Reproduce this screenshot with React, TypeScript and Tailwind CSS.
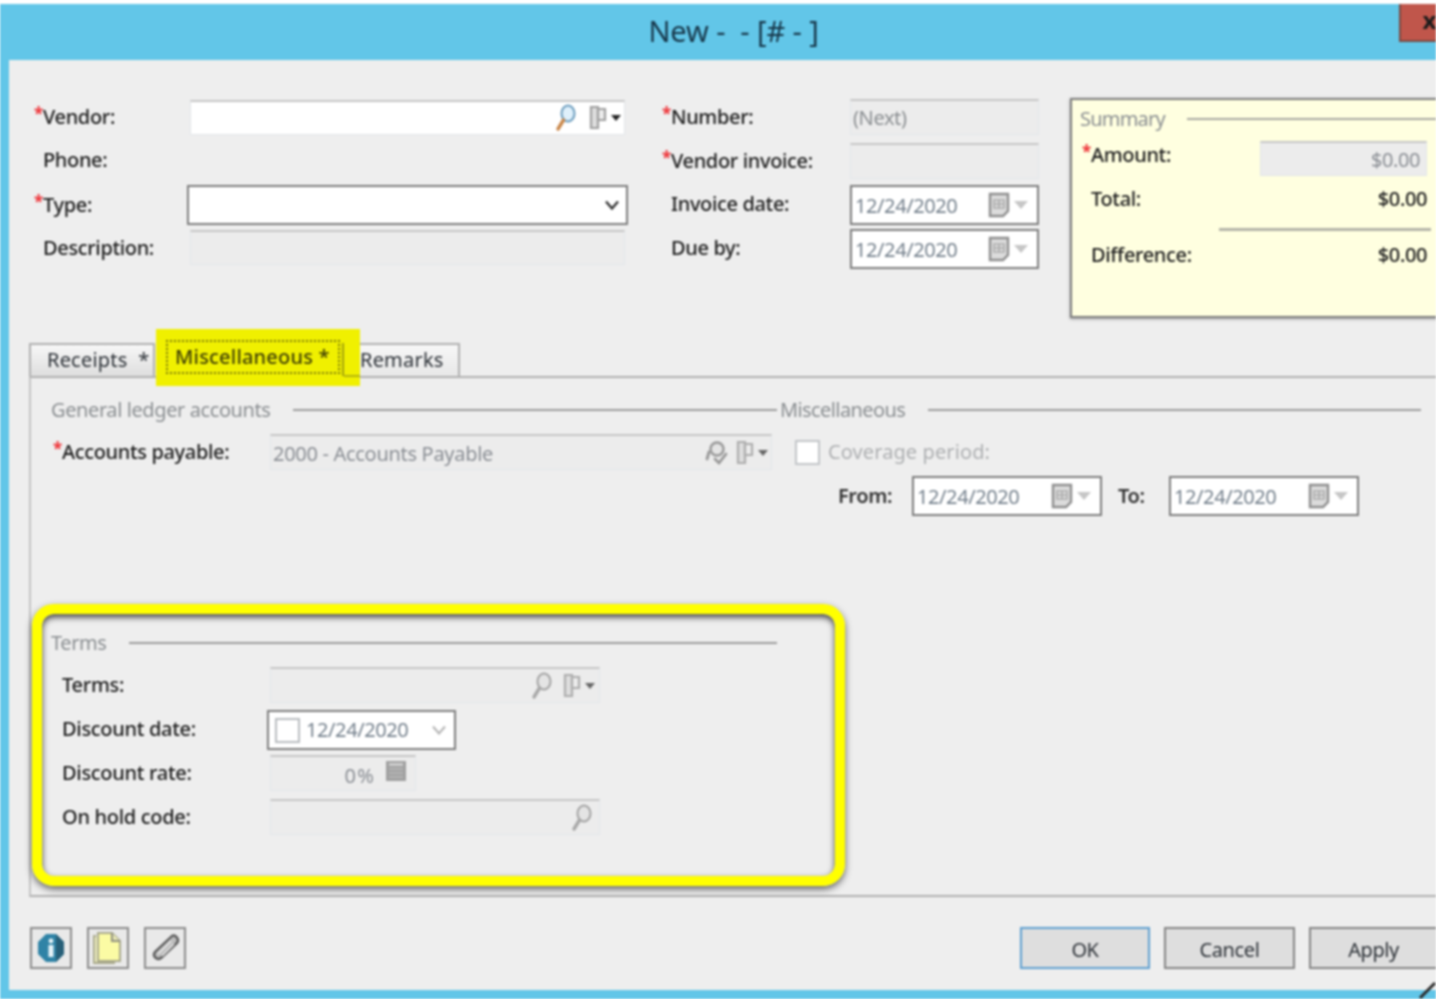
const font = "font-['Noto_Sans','DejaVu_Sans',sans-serif]";

function Lens({ muted = false }: { muted?: boolean }) {
  return (
    <svg width="24" height="28" viewBox="0 0 24 28" fill="none">
      <ellipse cx="15" cy="9.5" rx="6.5" ry="8" fill={muted ? "#e4e4e4" : "#dff0fb"} stroke={muted ? "#a3a3a3" : "#6b9cbd"} strokeWidth="2" />
      <path d="M10.5 16 5 25" stroke={muted ? "#a8a8a8" : "#c9874a"} strokeWidth="3.4" strokeLinecap="round" />
    </svg>
  );
}

function CheckLens() {
  return (
    <svg width="26" height="26" viewBox="0 0 26 26" fill="none">
      <circle cx="13" cy="9" r="6.5" fill="#e4e4e4" stroke="#989898" strokeWidth="2.4" />
      <path d="M5 12 3 19M11 19l4 4 7-9" stroke="#989898" strokeWidth="2.8" strokeLinecap="round" />
    </svg>
  );
}

function Note({ muted = false }: { muted?: boolean }) {
  const c = muted ? "#adadad" : "#a0a0a0";
  return (
    <span className="flex items-center gap-[4px]">
      <svg width="18" height="26" viewBox="0 0 18 26" fill="none">
        <path d="M2 2h7v21H2z" fill="#dedede" stroke={c} strokeWidth="2.2" />
        <path d="M9 4h7v11H9z" fill="#ececec" stroke={c} strokeWidth="2.2" />
      </svg>
      <svg width="10" height="6" viewBox="0 0 10 6">
        <path d="M0 0h10L5 6z" fill={muted ? "#666" : "#222"} />
      </svg>
    </span>
  );
}

function Calendar() {
  return (
    <span className="flex items-center gap-[4px]">
      <svg width="22" height="26" viewBox="0 0 22 26" fill="none">
        <path d="M2 2h18v17l-5 5H2z" fill="#dcdcdc" stroke="#8f8f8f" strokeWidth="2.4" />
        <path d="M6 8h10v8H6zM11 8v8M6 12h10" stroke="#adadad" strokeWidth="1.6" />
      </svg>
      <svg width="14" height="8" viewBox="0 0 14 8">
        <path d="M0 0h14L7 8z" fill="#c6c6c6" />
      </svg>
    </span>
  );
}

function Star() {
  return <span className="inline-block w-[9px] text-[17px] font-bold leading-none text-[#ee3338] align-[4px]">*</span>;
}

function Label({ text, req = false, className = "" }: { text: string; req?: boolean; className?: string }) {
  return (
    <span className={`whitespace-nowrap font-medium tracking-[-0.35px] text-[#1c1c1c] ${className}`}>
      {req ? <Star /> : <span className="inline-block w-[9px]" />}
      {text}
    </span>
  );
}

function Flat({ className = "", children }: { className?: string; children?: React.ReactNode }) {
  return (
    <div className={`flex items-center border border-[#e2e6ea] border-t-2 border-t-[#c6c6c6] bg-[#ececec] ${className}`}>
      {children}
    </div>
  );
}

function DateBox({ className = "" }: { className?: string }) {
  return (
    <div className={`flex h-[40px] items-center justify-between border-2 border-[#7d7d7d] bg-white pl-[3px] pr-[9px] text-[#74808c] ${className}`}>
      <span className="mt-[2px]">12/24/2020</span>
      <Calendar />
    </div>
  );
}

function Section({ title, className = "", gap = "ml-[22px]" }: { title: string; className?: string; gap?: string }) {
  return (
    <div className={`flex h-[24px] items-center ${className}`}>
      <span className="whitespace-nowrap text-[#8a8e91]">{title}</span>
      <span className={`h-[2px] flex-1 bg-[#9c9c9c] ${gap}`} />
    </div>
  );
}

function ToolButton({ children }: { children: React.ReactNode }) {
  return (
    <button className="flex h-[42px] w-[42px] items-center justify-center border-2 border-[#8c8c8c] bg-[#e9e9e9]">
      {children}
    </button>
  );
}

function ActionButton({ text, primary = false, className = "" }: { text: string; primary?: boolean; className?: string }) {
  return (
    <button
      className={`flex h-[42px] items-center justify-center border-2 bg-[#dedede] pt-[3px] text-[#2b3036] ${primary ? "border-[#5f9fd0]" : "border-[#858585]"} ${className}`}
    >
      {text}
    </button>
  );
}

export default function App() {
  return (
    <div className={`flex h-[999px] w-[1436px] flex-col overflow-hidden bg-white pt-[4px] text-[20px] leading-none tracking-[-0.4px] blur-[0.8px] ${font}`}>
      {/* title bar */}
      <div className="relative flex h-[56px] shrink-0 items-center justify-center bg-[#62c6e8] pl-[31px]">
        <span className="-mt-[4px] text-[29px] tracking-[-0.1px] text-[#17374a]">New -&nbsp; - [# - ]</span>
        <div className="absolute right-0 top-0 flex h-[38px] w-[37px] items-center justify-end border-b-2 border-l-2 border-[#7b4a42] bg-[#c0564b] text-[24px] font-bold text-[#1b1b1b]">
          <span className="-mt-[4px]">x</span>
        </div>
      </div>

      <div className="flex min-h-0 flex-1 flex-col bg-[#62c6e8] pb-[9px] pl-[9px]">
        <div className="relative flex min-h-0 flex-1 flex-col bg-[#eeeeee]">
          {/* header form */}
          <div className="flex h-[258px] shrink-0 pl-[25px] pt-[35px]">
            <div className="grid w-[591px] shrink-0 grid-cols-[156px_435px] auto-rows-[44px] items-center">
              <Label text="Vendor:" req className="-mt-[2px]" />
              <div className="flex h-[35px] items-center justify-end gap-[12px] border-x border-b border-t-2 border-x-[#e2e6ea] border-b-[#e2e6ea] border-t-[#c6c6c6] bg-white pr-[3px]">
                <Lens />
                <Note />
              </div>
              <Label text="Phone:" className="-mt-[2px]" />
              <span />
              <Label text="Type:" req className="-mt-[2px]" />
              <div className="-ml-[3px] -mr-[3px] flex h-[40px] items-center justify-end border-2 border-[#7d7d7d] bg-white pr-[6px]">
                <svg width="16" height="12" viewBox="0 0 16 12" fill="none">
                  <path d="M2 2.5 8 9.5 14 2.5" stroke="#333" strokeWidth="2.4" />
                </svg>
              </div>
              <Label text="Description:" className="-mt-[2px]" />
              <Flat className="-mt-[3px] h-[35px]" />
            </div>

            <div className="ml-[37px] grid w-[377px] shrink-0 grid-cols-[188px_189px] auto-rows-[44px] items-center">
              <Label text="Number:" req className="-mt-[2px]" />
              <Flat className="h-[36px] pl-[2px] text-[#8a8e91]">(Next)</Flat>
              <Label text="Vendor invoice:" req className="-mt-[2px]" />
              <Flat className="h-[36px]" />
              <Label text="Invoice date:" className="-mt-[2px]" />
              <DateBox />
              <Label text="Due by:" className="-mt-[2px]" />
              <DateBox />
            </div>

            {/* summary */}
            <div className="-mr-[2px] ml-[31px] mt-[3px] h-[220px] flex-1 border-2 border-[#7c7c7c] bg-[#ffffe0] pl-[8px] pr-[9px] pt-[9px] shadow-[0_1px_3px_rgba(0,0,0,0.35)]">
              <div className="flex h-[20px] items-center">
                <span className="tracking-[-0.8px] text-[#8a8e91]">Summary</span>
                <span className="-mr-[9px] ml-[22px] h-[2px] flex-1 bg-[#a8a8a0]" />
              </div>
              <div className="mt-[12px] flex h-[35px] items-center justify-between">
                <Label text="Amount:" req className="-mt-[10px] ml-[2px]" />
                <div className="flex h-[35px] w-[167px] items-center justify-end border-x border-b border-t-2 border-x-[#e2e6ea] border-b-[#e2e6ea] border-t-[#c6c6c6] bg-[#ececec] pr-[6px] text-[#8a8e94]">
                  <span className="mt-[2px]">$0.00</span>
                </div>
              </div>
              <div className="mt-[11px] flex h-[24px] items-center justify-between">
                <Label text="Total:" className="ml-[2px]" />
                <span className="font-medium text-[#1c1c1c]">$0.00</span>
              </div>
              <div className="-mr-[4px] ml-[139px] mt-[17px] h-[3px] bg-[#b4b4a8]" />
              <div className="mt-[12px] flex h-[24px] items-center justify-between">
                <Label text="Difference:" className="ml-[2px]" />
                <span className="font-medium text-[#1c1c1c]">$0.00</span>
              </div>
            </div>
          </div>

          {/* tabs */}
          <div className="mt-[25px] flex h-[33px] shrink-0 pl-[20px] tracking-[0.2px]">
            <div className="flex w-[126px] items-center whitespace-pre border-2 border-b-0 border-[#b0b0b0] bg-linear-to-b from-[#f7f7f7] to-[#dedede] pb-[2px] pl-[16px] text-[#2b3036]">
              Receipts  *
            </div>
            <div className="relative w-[188px]">
              <div className="absolute -top-[14px] left-[1px] z-10 h-[57px] w-[204px] bg-[#f0f000]">
                <div className="absolute left-[10px] top-[11px] h-[34px] w-[174px] border-2 border-dotted border-[#77770c]" />
                <div className="absolute left-[186px] top-[14px] h-[33px] w-[2px] bg-[#a3a30c]" />
                <div className="absolute left-[188px] top-[46px] h-[2px] w-[16px] bg-[#b4b40c]" />
                <span className="absolute left-[19px] top-[18px] whitespace-nowrap font-medium text-[#3f3f06]">Miscellaneous *</span>
              </div>
            </div>
            <div className="flex w-[117px] items-center border-2 border-b-0 border-[#b0b0b0] bg-linear-to-b from-[#f7f7f7] to-[#e8e8e8] pb-[2px] pl-[15px] text-[#2b3036]">
              Remarks
            </div>
          </div>

          {/* tab panel */}
          <div className="relative ml-[20px] flex h-[521px] shrink-0 border-y-2 border-l-2 border-y-[#b0b0b0] border-l-[#c4c4c4] pt-[20px]">
            <div className="w-[746px] shrink-0 pl-[20px]">
              <Section title="General ledger accounts" />
              <div className="mt-[12px] flex h-[36px] items-center">
                <Label text="Accounts payable:" req className="-mt-[2px] ml-[2px] w-[217px]" />
                <Flat className="h-[36px] w-[502px] shrink-0 justify-between pr-[3px] text-[#8a8e94]">
                  <span className="mt-[2px] pl-[2px] tracking-[-0.3px]">2000 - Accounts Payable</span>
                  <span className="flex items-center gap-[6px]">
                    <CheckLens />
                    <Note muted />
                  </span>
                </Flat>
              </div>

              <div className="mt-[161px]">
                <Section title="Terms" />
                <div className="ml-[11px] mt-[8px] grid auto-rows-[44px] grid-cols-[208px_auto] items-center justify-start">
                  <span className="font-medium tracking-[-0.3px] text-[#1c1c1c]">Terms:</span>
                  <Flat className="h-[36px] w-[330px] justify-end gap-[10px] pr-[4px]">
                    <Lens muted />
                    <Note muted />
                  </Flat>
                  <span className="font-medium tracking-[-0.3px] text-[#1c1c1c]">Discount date:</span>
                  <div className="-ml-[3px] mt-[2px] flex h-[40px] w-[189px] items-center border-2 border-[#7d7d7d] bg-white pl-[6px] pr-[8px] text-[#74808c]">
                    <span className="mr-[6px] h-[25px] w-[25px] border-2 border-[#b9bdc0] bg-white" />
                    <span>12/24/2020</span>
                    <svg className="ml-auto" width="14" height="10" viewBox="0 0 14 10" fill="none">
                      <path d="M1 1.5 7 8.5 13 1.5" stroke="#b4b4b4" strokeWidth="2" />
                    </svg>
                  </div>
                  <span className="font-medium tracking-[-0.3px] text-[#1c1c1c]">Discount rate:</span>
                  <Flat className="h-[36px] w-[146px] justify-end gap-[10px] pr-[8px] text-[#8a8e94]">
                    <span className="mt-[4px] tracking-[1.2px]">0%</span>
                    <svg className="-mt-[6px]" width="22" height="22" viewBox="0 0 22 22">
                      <rect x="1" y="1" width="20" height="20" fill="#a0a0a0" />
                      <rect x="4" y="3" width="14" height="3" fill="#cccccc" />
                      <path d="M4 9h14M4 13h14M4 17h14" stroke="#bcbcbc" strokeWidth="1.5" />
                    </svg>
                  </Flat>
                  <span className="font-medium tracking-[-0.3px] text-[#1c1c1c]">On hold code:</span>
                  <Flat className="h-[36px] w-[330px] justify-end pr-[6px]">
                    <Lens muted />
                  </Flat>
                </div>
              </div>
            </div>

            <div className="flex-1 pl-[3px]">
              <div className="w-[641px]">
                <Section title="Miscellaneous" gap="ml-[23px]" className="tracking-[-0.6px]" />
              </div>
              <div className="ml-[15px] mt-[18px] flex h-[25px] items-center">
                <span className="h-[25px] w-[25px] border-2 border-[#c2c5c8] bg-white" />
                <span className="-mt-[2px] ml-[8px] tracking-[0.1px] text-[#adafb1]">Coverage period:</span>
              </div>
              <div className="ml-[58px] mt-[11px] flex items-center">
                <span className="w-[74px] font-semibold tracking-[-0.4px] text-[#333]">From:</span>
                <DateBox className="w-[190px]" />
                <span className="ml-[16px] w-[51px] font-semibold text-[#333]">To:</span>
                <DateBox className="w-[190px]" />
              </div>
            </div>

            {/* yellow annotation round the terms group */}
            <div className="pointer-events-none absolute left-[1px] top-[226px] h-[282px] w-[813px] rounded-[22px] border-[10px] border-[#ffff00] shadow-[0_3px_7px_rgba(0,0,0,0.6),inset_0_3px_6px_rgba(0,0,0,0.75)]" />
          </div>

          {/* footer */}
          <div className="flex flex-1 items-start justify-between pl-[21px] pt-[30px]">
            <div className="flex gap-[15px]">
              <ToolButton>
                <svg width="28" height="30" viewBox="0 0 28 30">
                  <path d="M9 1h10l8 8v12l-8 8H9l-8-8V9z" fill="#2f83a6" />
                  <path d="M19 1l8 8v12l-8 8z" fill="#275f78" />
                  <circle cx="14" cy="8" r="2.4" fill="#e8f4f8" />
                  <rect x="11.5" y="12" width="5" height="12" fill="#e8f4f8" />
                </svg>
              </ToolButton>
              <ToolButton>
                <svg width="32" height="34" viewBox="0 0 32 34" fill="none">
                  <path d="M4 5H2v27h20v-2" fill="#f4f4c4" stroke="#a8a88a" strokeWidth="2" />
                  <path d="M6 2h14l8 8v20H6z" fill="#fbfba4" stroke="#a9a98c" strokeWidth="2" />
                  <path d="M20 2v8h8" fill="#e9e9b4" stroke="#909080" strokeWidth="2" />
                </svg>
              </ToolButton>
              <ToolButton>
                <svg width="30" height="30" viewBox="0 0 30 30" fill="none">
                  <path d="M22 3 5 19c-3 4 2 9 6 6L27 10c3-4-2-9-5-7z" fill="#bdbdbd" stroke="#5a5a5a" strokeWidth="2.4" />
                  <path d="M21 8 8 21M24 11 12 23" stroke="#eaeaea" strokeWidth="1.6" />
                </svg>
              </ToolButton>
            </div>
            <div className="flex gap-[14px]">
              <ActionButton text="OK" primary className="w-[130px]" />
              <ActionButton text="Cancel" className="w-[131px]" />
              <ActionButton text="Apply" className="w-[127px] border-r-0" />
            </div>
          </div>

          <svg className="absolute -bottom-[9px] right-0" width="18" height="18" viewBox="0 0 18 18">
            <path d="M2 17 17 2" stroke="#2a2a2a" strokeWidth="3" />
          </svg>
        </div>
      </div>
    </div>
  );
}
